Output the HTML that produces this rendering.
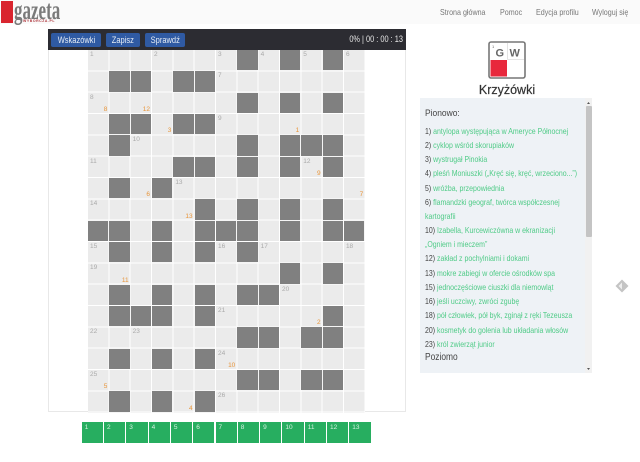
<!DOCTYPE html>
<html lang="pl"><head><meta charset="utf-8"><title>Krzyżówki</title>
<style>
html,body{margin:0;padding:0;background:#fff}
body{position:relative;width:640px;height:462px;overflow:hidden;font-family:"Liberation Sans",sans-serif}
.a{position:absolute}
#hd{left:0;top:0;width:640px;height:24px;background:#fafafa}
.nav{top:6.7px;font-size:8.4px;line-height:10px;color:#777;white-space:nowrap;transform:scaleX(.85);transform-origin:0 0}
.btn{top:33px;height:14px;background:#2f5aa3;border-radius:2px;color:#e4ebf5;font-size:9.4px;line-height:14px;text-align:center;white-space:nowrap}
.btn span{display:inline-block;transform:scaleX(.8)}
#grid{left:88px;top:50px;width:277.3px;height:362.6px;display:grid;grid-template-columns:repeat(13,21.33px);grid-template-rows:repeat(17,21.33px);
background-color:#ebebeb;background-image:repeating-linear-gradient(90deg,transparent 0,transparent 20.33px,#fff 20.33px,#fff 21.33px),repeating-linear-gradient(180deg,transparent 0,transparent 20.33px,#fff 20.33px,#fff 21.33px)}
#grid i{background:#808080;margin:0 1px 1px 0;z-index:2}
#grid b{font-weight:400;font-size:6.5px;line-height:8px;color:#aaa;padding:1px 0 0 2px;z-index:3;position:relative}
#grid u{text-decoration:none;font-size:6.5px;line-height:8px;color:#e8953a;align-self:end;justify-self:end;margin:0 2px 0 0;z-index:3;position:relative}
.t{top:422px;width:21.3px;height:21.3px;background:#27ae60;color:#d5f0df;font-size:6.5px;line-height:8px;text-indent:3px;padding-top:2px;box-sizing:border-box}
#clues{left:420px;top:98px;width:172px;height:275px;background:#eef2f6;overflow:hidden}
#clues div{position:absolute;left:5px;white-space:nowrap;font-size:8.6px;line-height:10px;color:#4fcb87;transform:scaleX(.81);transform-origin:0 0}
#clues div s{text-decoration:none;color:#444}
#clues div.h{color:#444}
</style></head><body>
<div class="a" id="hd"></div>
<div class="a" style="left:1px;top:1px;width:12px;height:22px;background:#d9252f"></div>
<div class="a" style="left:14px;top:-2px;font-family:'Liberation Serif',serif;font-weight:700;font-size:27px;line-height:25px;color:#7a7a7a;transform:scaleX(.63);transform-origin:0 0">gazeta</div>
<div class="a" style="left:23px;top:18.5px;font-size:3.5px;line-height:4px;color:#b13a40;letter-spacing:.55px;font-weight:700">WYBORCZA.PL</div>
<div class="a nav" style="left:440px">Strona główna</div>
<div class="a nav" style="left:500px">Pomoc</div>
<div class="a nav" style="left:535.5px">Edycja profilu</div>
<div class="a nav" style="left:592px">Wyloguj się</div>

<div class="a" style="left:48px;top:29px;width:358px;height:383px;box-sizing:border-box;border:1px solid #e8e8e8;border-top:0;background:#fff"></div>
<div class="a" style="left:48px;top:29px;width:358px;height:21px;background:#2c2c32"></div>
<div class="a btn" style="left:51px;width:50px"><span>Wskazówki</span></div>
<div class="a btn" style="left:106px;width:34px"><span>Zapisz</span></div>
<div class="a btn" style="left:145px;width:40px"><span>Sprawdź</span></div>
<div class="a" style="left:302.5px;top:34px;width:100px;text-align:right;color:#e6e6e6;font-size:9.6px;line-height:12px;white-space:nowrap;transform:scaleX(.77);transform-origin:100% 0">0% | 00 : 00 : 13</div>

<div class="a" id="grid">
<b style="grid-area:1/1">1</b><b style="grid-area:1/4">2</b><b style="grid-area:1/7">3</b><i style="grid-area:1/8"></i><b style="grid-area:1/9">4</b><i style="grid-area:1/10"></i><b style="grid-area:1/11">5</b><i style="grid-area:1/12"></i><b style="grid-area:1/13">6</b>
<i style="grid-area:2/2"></i><i style="grid-area:2/3"></i><i style="grid-area:2/5"></i><i style="grid-area:2/6"></i><b style="grid-area:2/7">7</b>
<b style="grid-area:3/1">8</b><u style="grid-area:3/1">8</u><u style="grid-area:3/3">12</u><i style="grid-area:3/8"></i><i style="grid-area:3/10"></i><i style="grid-area:3/12"></i>
<i style="grid-area:4/2"></i><i style="grid-area:4/3"></i><u style="grid-area:4/4">3</u><i style="grid-area:4/5"></i><i style="grid-area:4/6"></i><b style="grid-area:4/7">9</b><u style="grid-area:4/10">1</u>
<i style="grid-area:5/2"></i><b style="grid-area:5/3">10</b><i style="grid-area:5/8"></i><i style="grid-area:5/10"></i><i style="grid-area:5/11"></i><i style="grid-area:5/12"></i>
<b style="grid-area:6/1">11</b><i style="grid-area:6/5"></i><i style="grid-area:6/6"></i><i style="grid-area:6/8"></i><i style="grid-area:6/10"></i><b style="grid-area:6/11">12</b><u style="grid-area:6/11">9</u><i style="grid-area:6/12"></i>
<i style="grid-area:7/2"></i><u style="grid-area:7/3">6</u><i style="grid-area:7/4"></i><b style="grid-area:7/5">13</b><u style="grid-area:7/13">7</u>
<b style="grid-area:8/1">14</b><u style="grid-area:8/5">13</u><i style="grid-area:8/6"></i><i style="grid-area:8/8"></i><i style="grid-area:8/10"></i><i style="grid-area:8/12"></i>
<i style="grid-area:9/1"></i><i style="grid-area:9/2"></i><i style="grid-area:9/4"></i><i style="grid-area:9/6"></i><i style="grid-area:9/7"></i><i style="grid-area:9/8"></i><i style="grid-area:9/10"></i><i style="grid-area:9/12"></i><i style="grid-area:9/13"></i>
<b style="grid-area:10/1">15</b><i style="grid-area:10/2"></i><i style="grid-area:10/4"></i><i style="grid-area:10/6"></i><b style="grid-area:10/7">16</b><i style="grid-area:10/8"></i><b style="grid-area:10/9">17</b><b style="grid-area:10/13">18</b>
<b style="grid-area:11/1">19</b><u style="grid-area:11/2">11</u><i style="grid-area:11/10"></i><i style="grid-area:11/12"></i>
<i style="grid-area:12/2"></i><i style="grid-area:12/4"></i><i style="grid-area:12/6"></i><i style="grid-area:12/8"></i><i style="grid-area:12/9"></i><b style="grid-area:12/10">20</b>
<i style="grid-area:13/2"></i><i style="grid-area:13/3"></i><i style="grid-area:13/4"></i><i style="grid-area:13/6"></i><b style="grid-area:13/7">21</b><u style="grid-area:13/11">2</u><i style="grid-area:13/12"></i>
<b style="grid-area:14/1">22</b><b style="grid-area:14/3">23</b><i style="grid-area:14/8"></i><i style="grid-area:14/9"></i><i style="grid-area:14/11"></i><i style="grid-area:14/12"></i>
<i style="grid-area:15/2"></i><i style="grid-area:15/4"></i><i style="grid-area:15/6"></i><b style="grid-area:15/7">24</b><u style="grid-area:15/7">10</u>
<b style="grid-area:16/1">25</b><u style="grid-area:16/1">5</u><i style="grid-area:16/8"></i><i style="grid-area:16/9"></i><i style="grid-area:16/11"></i><i style="grid-area:16/12"></i>
<i style="grid-area:17/2"></i><i style="grid-area:17/4"></i><u style="grid-area:17/5">4</u><i style="grid-area:17/6"></i><b style="grid-area:17/7">26</b>
</div>

<div class="a t" style="left:81.7px">1</div><div class="a t" style="left:104px">2</div><div class="a t" style="left:126.3px">3</div><div class="a t" style="left:148.6px">4</div><div class="a t" style="left:170.9px">5</div><div class="a t" style="left:193.2px">6</div><div class="a t" style="left:215.5px">7</div><div class="a t" style="left:237.8px">8</div><div class="a t" style="left:260.1px">9</div><div class="a t" style="left:282.4px">10</div><div class="a t" style="left:304.7px">11</div><div class="a t" style="left:327px">12</div><div class="a t" style="left:349.3px">13</div>

<svg class="a" style="left:488px;top:41px" width="38" height="38" viewBox="0 0 38 38">
<rect x="1" y="1" width="36" height="36" rx="2" fill="#fff" stroke="#777" stroke-width="1.6"/>
<rect x="2.5" y="19" width="16.5" height="16.5" fill="#e8283c"/>
<path d="M19.5 2v16.5M19.5 18.5H36" stroke="#ddd" stroke-width=".8" fill="none"/>
<text x="4" y="7" font-size="4" fill="#666" font-family="Liberation Sans">1</text>
<text x="7.5" y="15.5" font-size="11" font-weight="700" fill="#666" font-family="Liberation Sans">G</text>
<text x="21.5" y="15.5" font-size="11" font-weight="700" fill="#666" font-family="Liberation Sans">W</text>
</svg>
<div class="a" style="left:457px;top:83px;width:100px;text-align:center;font-size:12.5px;line-height:15px;color:#333;-webkit-text-stroke:.2px #333">Krzyżówki</div>

<div class="a" id="clues">
<div class="h" style="top:11px;font-size:9.6px;transform:scaleX(.88)">Pionowo:</div>
<div style="top:28px"><s>1)</s> antylopa występująca w Ameryce Północnej</div>
<div style="top:42px"><s>2)</s> cyklop wśród skorupiaków</div>
<div style="top:56px"><s>3)</s> wystrugał Pinokia</div>
<div style="top:70px"><s>4)</s> pleśń Moniuszki („Kręć się, kręć, wrzeciono...”)</div>
<div style="top:85px"><s>5)</s> wróżba, przepowiednia</div>
<div style="top:99px"><s>6)</s> flamandzki geograf, twórca współczesnej</div>
<div style="top:113px">kartografii</div>
<div style="top:127px"><s>10)</s> Izabella, Kurcewiczówna w ekranizacji</div>
<div style="top:141px">„Ogniem i mieczem”</div>
<div style="top:155px"><s>12)</s> zakład z pochylniami i dokami</div>
<div style="top:170px"><s>13)</s> mokre zabiegi w ofercie ośrodków spa</div>
<div style="top:184px"><s>15)</s> jednoczęściowe ciuszki dla niemowląt</div>
<div style="top:198px"><s>16)</s> jeśli uczciwy, zwróci zgubę</div>
<div style="top:212px"><s>18)</s> pół człowiek, pół byk, zginął z ręki Tezeusza</div>
<div style="top:227px"><s>20)</s> kosmetyk do golenia lub układania włosów</div>
<div style="top:241px"><s>23)</s> król zwierząt junior</div>
<div class="h" style="top:255px;font-size:10px;transform:scaleX(.84)">Poziomo</div>
</div>
<div class="a" style="left:585px;top:98px;width:7px;height:275px;background:#f1f1f1"></div>
<div class="a" style="left:585.5px;top:106px;width:6px;height:131px;background:#c4c4c4;border-radius:1px"></div>
<svg class="a" style="left:585px;top:98px" width="7" height="275"><path d="M3.5 4l-1.5 2h3zM3.5 272l-1.5-2h3z" fill="#555"/></svg>
<svg class="a" style="left:615px;top:279px" width="14" height="14" viewBox="0 0 14 14"><path d="M7 .5L13.5 7 7 13.5.5 7z" fill="#c4c4c4"/><path d="M7 3.5L3.5 7 7 10.5z" fill="#eee"/></svg>
</body></html>
